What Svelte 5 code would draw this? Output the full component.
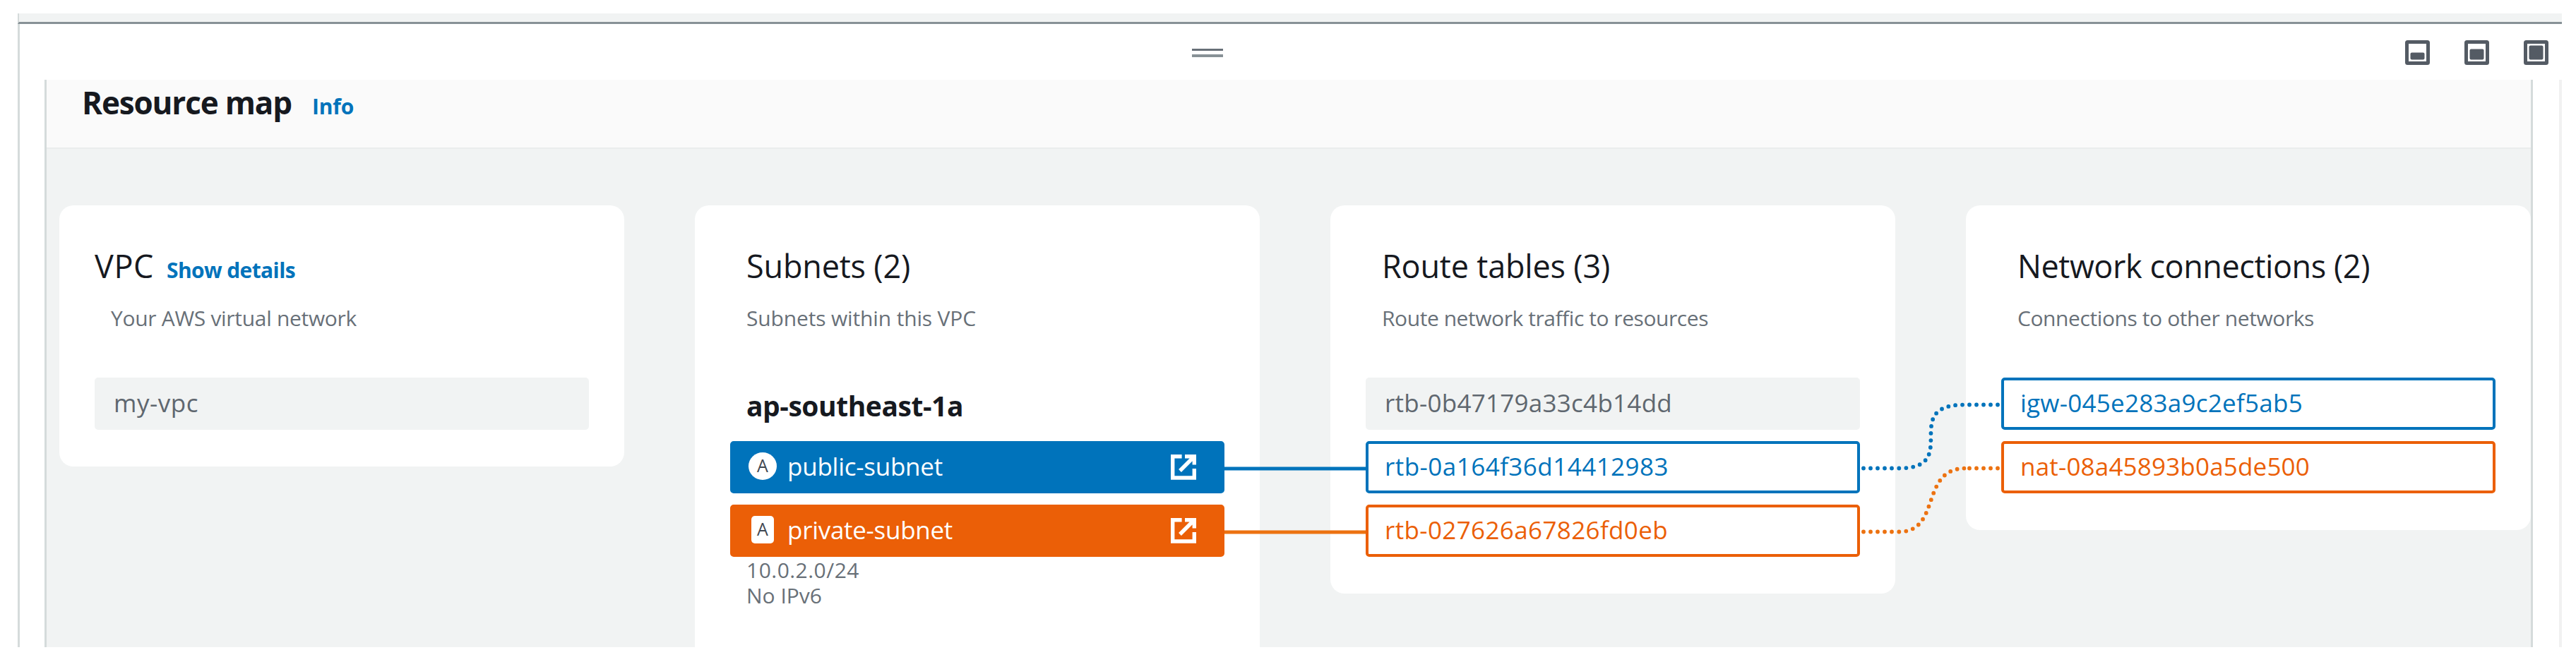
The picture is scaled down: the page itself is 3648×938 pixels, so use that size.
<script>
  // Tracks a label so that it occupies the given width in pixels.
  function fit(node, width) {
    if (!width) return;
    const natural = node.getBoundingClientRect().width;
    const gaps = node.textContent.length;
    node.style.letterSpacing = `${((width - natural) / gaps).toFixed(3)}px`;
  }

  const columns = [
    {
      title: 'VPC', w: 84, link: 'Show details', sub: 'Your AWS virtual network', subW: 348, first: true,
      items: [{ kind: 'muted', text: 'my-vpc', w: 120 }]
    },
    {
      title: 'Subnets (2)', w: 232, sub: 'Subnets within this VPC', subW: 325, zone: 'ap-southeast-1a', tall: true,
      items: [
        { kind: 'solid blue', text: 'public-subnet', w: 220, badge: 'round' },
        { kind: 'solid orange', text: 'private-subnet', w: 234, badge: 'square' }
      ],
      notes: [{ text: '10.0.2.0/24', w: 160 }, { text: 'No IPv6', w: 107 }]
    },
    {
      title: 'Route tables (3)', w: 323, sub: 'Route network traffic to resources', subW: 462,
      items: [
        { kind: 'muted', text: 'rtb-0b47179a33c4b14dd', w: 407 },
        { kind: 'outline blue', text: 'rtb-0a164f36d14412983', w: 402 },
        { kind: 'outline orange', text: 'rtb-027626a67826fd0eb', w: 401 }
      ]
    },
    {
      title: 'Network connections (2)', w: 499, sub: 'Connections to other networks', subW: 420,
      items: [
        { kind: 'outline blue', text: 'igw-045e283a9c2ef5ab5', w: 400 },
        { kind: 'outline orange', text: 'nat-08a45893b0a5de500', w: 410 }
      ]
    }
  ];
  const sizes = [
    { y: 17.5, h: 10 },
    { y: 12.5, h: 15 },
    { y: 7.5, h: 20 }
  ];
</script>

<div class="page">
  <div class="strip"></div>
  <div class="toolbar">
    <div class="grip"><i></i><i></i></div>
    <div class="sizes">
      {#each sizes as s}
        <svg width="35" height="35" viewBox="0 0 35 35">
          <rect x="2.5" y="2.5" width="30" height="30" rx="1" fill="none" stroke="#545b64" stroke-width="5" />
          <rect x="7.5" y={s.y} width="20" height={s.h} rx="2" fill="#545b64" />
        </svg>
      {/each}
    </div>
  </div>
  <div class="body">
    <div class="panel">
      <header><h2 use:fit={297}>Resource map</h2><a class="info" use:fit={59}>Info</a></header>
      <div class="map">
        {#each columns as c}
          <section class="card" class:tall={c.tall} class:first={c.first}>
            <div class="head"><h3 use:fit={c.w}>{c.title}</h3>{#if c.link}<a use:fit={182}>{c.link}</a>{/if}</div>
            <p class="sub"><span use:fit={c.subW}>{c.sub}</span></p>
            <div class="zone">{#if c.zone}<strong use:fit={307}>{c.zone}</strong>{/if}</div>
            <div class="items">
              {#each c.items as it}
                <div class="item {it.kind}">
                  {#if it.badge}<span class="badge {it.badge}">A</span>{/if}
                  <span class="label" use:fit={it.w}>{it.text}</span>
                  {#if it.badge}
                    <svg class="ext" width="36" height="36" viewBox="0 0 36 36" fill="none" stroke="#fff" stroke-width="5.4">
                      <path d="M15.6 2.7H2.7V33H33.3V20M20 2.7H33.3V14.5M32 4L13 23" />
                    </svg>
                  {/if}
                </div>
              {/each}
            </div>
            {#if c.notes}<div class="notes">{#each c.notes as n}<div><span use:fit={n.w}>{n.text}</span></div>{/each}</div>{/if}
          </section>
        {/each}
        <svg class="links" width="3520" height="706" viewBox="64 211 3520 706" fill="none" stroke-width="5">
          <path d="M1734 664H1934" stroke="#0073bb" />
          <path d="M1734 754H1934" stroke="#ec7211" />
          <g stroke-linecap="round" stroke-width="5.8" stroke-dasharray="0 10">
            <path d="M2639 663.5H2684M2689.3 663.5C2780 663.5 2688 573.5 2782 573.5M2789 573.5H2832" stroke="#0073bb" />
            <path d="M2639 753.5H2684M2689.3 753.5C2750 753.5 2718 663.5 2784 663.5M2789 663.5H2832" stroke="#ec7211" />
          </g>
        </svg>
      </div>
    </div>
    <div class="rail"></div>
  </div>
</div>

<style>
  :global(body) { background: #fff; }
  .page { width: 3648px; height: 917px; overflow: hidden; box-sizing: border-box; padding: 19px 20px 0 25px; font-family: "Open Sans", "Noto Sans", sans-serif; font-weight: 450; color: #16191f; }
  .page * { box-sizing: border-box; }
  .strip { height: 15px; background: #f1f3f3; border-bottom: 3px solid #879196; border-left: 2px solid #d5dbdb; }
  .toolbar { height: 79px; display: flex; align-items: flex-start; border-left: 3px solid #d5dbdb; }
  .grip { margin: 35px 0 0 1660px; width: 44px; display: flex; flex-direction: column; gap: 5px; }
  .grip i { height: 3px; background: #687078; }
  .grip i + i { height: 4px; background: #879196; }
  .sizes { margin: 23px 0 0 1674px; display: flex; gap: 49px; }
  .sizes svg { display: block; }
  .body { height: 804px; display: flex; border-left: 3px solid #d5dbdb; }
  .panel { margin-left: 35px; width: 3524px; border-left: 3px solid #d5dbdb; border-right: 3px solid #d5dbdb; background: #f1f3f3; }
  .rail { margin-left: 37px; width: 4px; background: #f1f1f1; }
  header { height: 98px; background: #fafafa; border-bottom: 2px solid #eaeded; display: flex; align-items: baseline; padding-left: 50px; }
  h2, h3, p { margin: 0; white-space: nowrap; }
  h2 { font-size: 44px; font-weight: 680; line-height: 64px; }
  a { color: #0073bb; font-size: 30px; font-weight: 680; white-space: nowrap; }
  .info { margin-left: 29px; }
  .map { height: 706px; position: relative; display: flex; gap: 100px; align-items: flex-start; padding: 80px 0 0 18px; }
  .card { flex: 0 0 800px; background: #fff; border-radius: 20px; padding: 52px 50px; display: flex; flex-direction: column; }
  .tall { height: 700px; }
  .head { display: flex; align-items: baseline; padding-left: 23px; gap: 18px; height: 72px; }
  .first .head { padding-left: 0; }
  h3 { font-size: 45px; font-weight: 420; line-height: 68px; }
  .sub { font-size: 30px; line-height: 40px; padding: 16px 0 0 23px; color: #687078; }
  .zone { height: 64px; }
  .zone:has(strong) { height: 154px; padding: 79px 0 0 23px; font-size: 39px; line-height: 50px; }
  .zone strong { font-weight: 680; white-space: nowrap; }
  .items { display: flex; flex-direction: column; gap: 16px; }
  .item { height: 74px; border-radius: 5px; display: flex; align-items: center; border: 4px solid transparent; font-size: 35px; line-height: 60px; padding: 0 22px 3px 23px; white-space: nowrap; }
  .muted { background: #f1f3f3; color: #5f676f; border-color: #f1f3f3; }
  .outline.blue { border-color: #0073bb; color: #0073bb; background: #fff; }
  .outline.orange { border-color: #eb5f07; color: #eb5f07; background: #fff; }
  .solid { color: #fff; font-weight: 520; padding-left: 22px; }
  .solid.blue { background: #0073bb; border-color: #0073bb; }
  .solid.orange { background: #eb5f07; border-color: #eb5f07; }
  .badge { background: #fff; color: #3f4650; font-size: 25px; font-weight: 450; line-height: 37px; text-align: center; width: 40px; height: 39px; border-radius: 50%; margin-right: 15px; }
  .badge.square { width: 32px; border-radius: 5px; margin: 0 19px 0 4px; }
  .ext { margin: 3px 14px 0 auto; }
  .notes { padding: 1px 0 0 23px; font-size: 30px; line-height: 36px; color: #687078; }
  .links { position: absolute; left: -2px; top: 0; }
</style>
